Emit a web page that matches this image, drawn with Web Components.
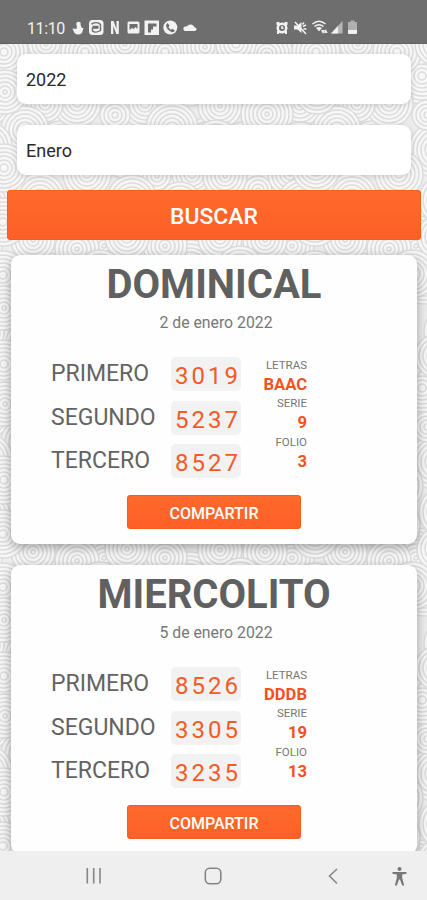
<!DOCTYPE html>
<html lang="es">
<head>
<meta charset="utf-8">
<meta name="viewport" content="width=device-width, initial-scale=1">
<title>Sorteos</title>
<style>
  html, body { margin: 0; height: 100%; overflow: hidden; }
  body { font-family: Roboto, "Liberation Sans", sans-serif; }
</style>
</head>
<body>
<phone-screen>
  <status-bar slot="top" time="11:10"></status-bar>
  <select-box>2022</select-box>
  <select-box>Enero</select-box>
  <orange-button class="search">BUSCAR</orange-button>
  <result-card name="DOMINICAL" date="2 de enero 2022" numbers="3019,5237,8527" letras="BAAC" serie="9" folio="3"></result-card>
  <result-card name="MIERCOLITO" date="5 de enero 2022" numbers="8526,3305,3235" letras="DDDB" serie="19" folio="13"></result-card>
  <nav-bar slot="bottom"></nav-bar>
</phone-screen>

<script>
class CirclePattern extends HTMLElement {
  connectedCallback() {
    const root = this.attachShadow({ mode: 'open' });
    // x, y, radius of every disc in one tile, back to front
    const discs = [
      // filler
      [108, 232, 28], [240, 24, 28], [140, 20, 28], [60, 20, 28], [188, 16, 28], [24, 30, 26], [290, 20, 26],
      [33, 78, 26], [110, 76, 28], [190, 78, 28], [235, 84, 26], [290, 80, 28], [70, 80, 26], [150, 74, 26],
      [210, 145, 28], [245, 150, 28], [300, 142, 28], [60, 145, 28], [125, 150, 28], [190, 160, 28],
      [80, 214, 28], [225, 212, 28], [190, 268, 28], [112, 276, 28], [240, 276, 28], [45, 276, 28], [150, 292, 28],
      [285, 288, 28], [205, 304, 26],
      // rows that show between the boxes
      [46, 44, 22], [85, 52, 24], [125, 44, 22], [165, 52, 24], [205, 47, 22], [267, 54, 26], [236, 44, 20],
      [145, 104, 24], [220, 106, 22], [300, 104, 22], [77, 103, 24], [45, 104, 18],
      [25, 130, 24], [172, 128, 26], [267, 114, 26], [115, 115, 15], [216, 144, 24], [300, 146, 24],
      [157, 176, 22], [258, 190, 22], [192, 174, 20], [87, 174, 24], [225, 176, 22], [290, 174, 22],
      [40, 198, 25], [132, 200, 25], [180, 204, 22], [302, 202, 24],
      [165, 246, 22], [292, 246, 22], [104, 246, 18], [33, 240, 22], [127, 237, 22], [220, 238, 22], [265, 240, 22], [77, 249, 22],
      [100, 274, 24], [240, 270, 24], [55, 278, 22],
      // left edge
      [4, 52, 24], [4, 168, 24], [3, 222, 24], [3, 275, 24], [4, 308, 22], [5, 92, 22]
    ];
    const tile = 312;
    let circles = '';
    for (const [x, y, r] of discs) {
      for (let ty = -1; ty < 3; ty++) {
        for (let tx = -1; tx < 2; tx++) {
          for (let i = r; i > 1; i -= 4) {
            circles += `<circle cx="${x + tx * tile}" cy="${y + ty * tile}" r="${i}"/>`;
          }
        }
      }
    }
    root.innerHTML = `
      <style>
        :host { display: block; overflow: hidden; background: #ededed; }
        svg { display: block; }
        circle { fill: #f7f7f7; stroke: #dcdcdc; stroke-width: 1.5; }
      </style>
      <svg width="427" height="900" viewBox="0 0 427 900">${circles}</svg>
    `;
  }
}

class PhoneScreen extends HTMLElement {
  connectedCallback() {
    const root = this.attachShadow({ mode: 'open' });
    root.innerHTML = `
      <style>
        :host { display: grid; grid-template: 44px 807px 49px / 427px; width: 427px; height: 900px; overflow: hidden; }
        circle-pattern { grid-area: 1 / 1 / 4 / 2; }
        ::slotted([slot=top]) { grid-area: 1 / 1; z-index: 1; }
        ::slotted([slot=bottom]) { grid-area: 3 / 1; z-index: 1; }
        main { grid-area: 2 / 1; display: flex; flex-direction: column; overflow: hidden; padding-top: 10px; z-index: 1; }
        ::slotted(select-box) { margin: 0 16px 21px 17px; }
        ::slotted(.search) { --size: 22.9px; height: 50px; margin: -6px 6px 15px 7px; }
        ::slotted(result-card) { margin: 0 10px 21px 11px; }
      </style>
      <circle-pattern></circle-pattern>
      <slot name="top"></slot>
      <main><slot></slot></main>
      <slot name="bottom"></slot>
    `;
  }
}

class StatusBar extends HTMLElement {
  connectedCallback() {
    const root = this.attachShadow({ mode: 'open' });
    root.innerHTML = `
      <style>
        :host { display: flex; justify-content: space-between; align-items: center; box-sizing: border-box;
          padding: 11px 68px 0 27px; background: #6e6e6e; border-bottom: 1px solid #626262; color: #f2f2f2; }
        .group { display: flex; align-items: center; }
        .time { font-size: 16px; width: 45px; line-height: 20px; padding-top: 3px; letter-spacing: -.4px; }
        svg { display: block; fill: #f2f2f2; }
        .dark { fill: #6e6e6e; }
        .line { fill: none; stroke: #f2f2f2; stroke-width: 1.5; }
        .cut { fill: none; stroke: #6e6e6e; stroke-width: 1.4; }
      </style>
      <div class="group">
        <span class="time">${this.getAttribute('time')}</span>
        <svg width="125" height="18" viewBox="72 18 125 18">
          <circle cx="78.500" cy="24" r="2.300"/>
          <path d="M77 25h3.500l1.500 3h1.500l-1.500 5q-4 3-7.500 0L72.500 28.500l4 .5z"/>
          <rect x="89" y="20" width="14.500" height="15" rx="3.500"/>
          <path class="cut" d="M91.500 24q6-3 9 .5v6q-5 3-8 .5v-3h6M92.500 26.500h6"/>
          <path d="M111 21h2.500l3 8v-8h2.300v13h-2.500l-3-8v8H111z"/>
          <rect x="127.500" y="21.500" width="12" height="12" rx="1.500"/>
          <path class="dark" d="M129.500 24h8v5l-2-2-2 2-1.500-1-2.500 2z"/>
          <path d="M129 32l3-3 1.500 1.500 2-2 2.500 3.500z"/>
          <rect x="144.500" y="20.500" width="14.500" height="14.500"/>
          <path class="dark" d="M148 23.500h8.500v3H153v3h-2v3h-3z"/>
          <circle cx="170.300" cy="27.500" r="7"/>
          <path class="dark" d="M167.500 23l2 2.500-1 1.500q1 2 2.500 2.700l1.500-1 2.500 2q-1.500 2-3.500 1.300-5-2-5.500-7z"/>
          <path d="M184.500 31a2.600 2.600 0 0 1 .5-4.600q1.500 0 2-.1a4.200 4.200 0 0 1 7.500 1q1.600.3 2 1.400.3 2.300-2 2.300z"/>
        </svg>
      </div>
      <svg width="84" height="18" viewBox="275 18 84 18">
        <circle cx="282" cy="28" r="5.500"/>
        <path d="M276.500 22h3v3h-3zM284.500 22h3v3h-3zM277 31h2v3h-2zM285 31h2v3h-2z"/>
        <circle class="dark" cx="282" cy="28" r="3"/>
        <path class="line" d="M282 26v2.300h1.500"/>
        <path d="M294 25.500h3.500l4-3.500v11l-4-3.500H294z"/>
        <path class="line" d="M295 22l11 12M304 22.500l-1.500 2M306 25l-3 1.500M303.500 29h3"/>
        <path class="line" d="M312.500 24q6.500-5.500 13 0M314.500 26.500q4.500-3.500 9 0"/>
        <path d="M316 28q3-2 6 0l-3 3.200zM321 30l2 4 2-4zM324 33l1.800-4 1.800 4z"/>
        <path opacity=".55" d="M342.500 21v12.500H331z"/>
        <path d="M338 26v7.500h-7z"/>
        <path opacity=".5" d="M350.500 20.500h4v1.500h2.500v8h-9v-8h2.500z"/>
        <path d="M348 30h9v3q0 1-1 1h-7q-1 0-1-1z"/>
      </svg>
    `;
  }
}

class SelectBox extends HTMLElement {
  connectedCallback() {
    const root = this.attachShadow({ mode: 'open' });
    root.innerHTML = `
      <style>
        :host { display: flex; align-items: center; flex: none; box-sizing: border-box; height: 50px; padding: 0 9px;
          border-radius: 9px; background: #fff; color: #2a2a2a; font-size: 18px; box-shadow: 0 1px 6px rgba(0, 0, 0, .16); }
      </style>
      <slot></slot>
    `;
  }
}

class OrangeButton extends HTMLElement {
  connectedCallback() {
    const root = this.attachShadow({ mode: 'open' });
    root.innerHTML = `
      <style>
        :host { display: flex; align-items: center; justify-content: center; flex: none; box-sizing: border-box;
          height: 34px; padding-top: 2px; border-radius: 4px; background: linear-gradient(#ff6a2b, #fe5f27);
          box-shadow: inset 0 0 0 1px #f85c20; color: #fff; font-size: var(--size, 16px); font-weight: 500; }
      </style>
      <slot></slot>
    `;
  }
}

class ResultCard extends HTMLElement {
  connectedCallback() {
    const root = this.attachShadow({ mode: 'open' });
    const attr = (name) => this.getAttribute(name);
    const places = ['PRIMERO', 'SEGUNDO', 'TERCERO'];
    const rows = attr('numbers').split(',').map((n, i) => `
      <div class="row"><span class="place">${places[i]}</span><span class="number">${n}</span></div>
    `).join('');
    const extras = ['letras', 'serie', 'folio'].map((key) => `
      <small>${key.toUpperCase()}</small><b>${attr(key)}</b>
    `).join('');

    root.innerHTML = `
      <style>
        :host { display: flex; flex-direction: column; flex: none; box-sizing: border-box; height: 289px;
          border-radius: 9px; background: #fefefe; color: #666; box-shadow: 0 3px 11px rgba(0, 0, 0, .34); }
        h2 { margin: 6px 0 0; font-size: 40px; line-height: 48px; font-weight: 700; text-align: center; color: #606060; }
        .date { margin-top: 4px; padding-left: 4px; font-size: 15.800px; line-height: 20px; text-align: center; color: #777; }
        .body { display: flex; margin: 24px 0 0 40px; }
        .rows { display: flex; flex-direction: column; gap: 9.500px; width: 190px; }
        .row { display: flex; align-items: center; justify-content: space-between; height: 34px; }
        .place { font-size: 23px; line-height: 30px; color: #636363; }
        .number { box-sizing: border-box; width: 70px; height: 34px; padding: 2px 0 0 4px; border-radius: 5px;
          background: #f2f2f2; color: #f55a27; font-size: 24px; line-height: 34px; letter-spacing: 3px; }
        .extras { display: flex; flex-direction: column; width: 66px; text-align: right; }
        small { font-size: 11.500px; line-height: 17px; color: #777; }
        b { font-size: 16.600px; line-height: 21.300px; color: #f4511e; }
        orange-button { width: 174px; margin: 17px 0 0 116px; }
      </style>
      <h2>${attr('name')}</h2>
      <div class="date">${attr('date')}</div>
      <div class="body">
        <div class="rows">${rows}</div>
        <div class="extras">${extras}</div>
      </div>
      <orange-button>COMPARTIR</orange-button>
    `;
  }
}

class NavBar extends HTMLElement {
  connectedCallback() {
    const root = this.attachShadow({ mode: 'open' });
    root.innerHTML = `
      <style>
        :host { display: block; background: #efefef; }
        svg { display: block; fill: none; stroke: #858585; stroke-width: 1.6; }
        .person { fill: #777; stroke: none; }
      </style>
      <svg width="427" height="49" viewBox="0 851 427 49">
        <path d="M87.300 868v15.500M93.700 868v15.500M100 868v15.500"/>
        <rect x="205.300" y="868.300" width="15.500" height="15.500" rx="4.500"/>
        <path d="M337 869l-7.500 7 7.500 7.500"/>
        <g class="person">
          <circle cx="399.500" cy="869" r="2"/>
          <path d="M392.500 872h14v1.800l-4.300.8v3.500l2 7.400h-2l-2.200-6h-1l-2.200 6h-2l2-7.400v-3.500l-4.300-.8z"/>
        </g>
      </svg>
    `;
  }
}

customElements.define('circle-pattern', CirclePattern);
customElements.define('status-bar', StatusBar);
customElements.define('select-box', SelectBox);
customElements.define('orange-button', OrangeButton);
customElements.define('result-card', ResultCard);
customElements.define('nav-bar', NavBar);
customElements.define('phone-screen', PhoneScreen);
</script>
</body>
</html>
